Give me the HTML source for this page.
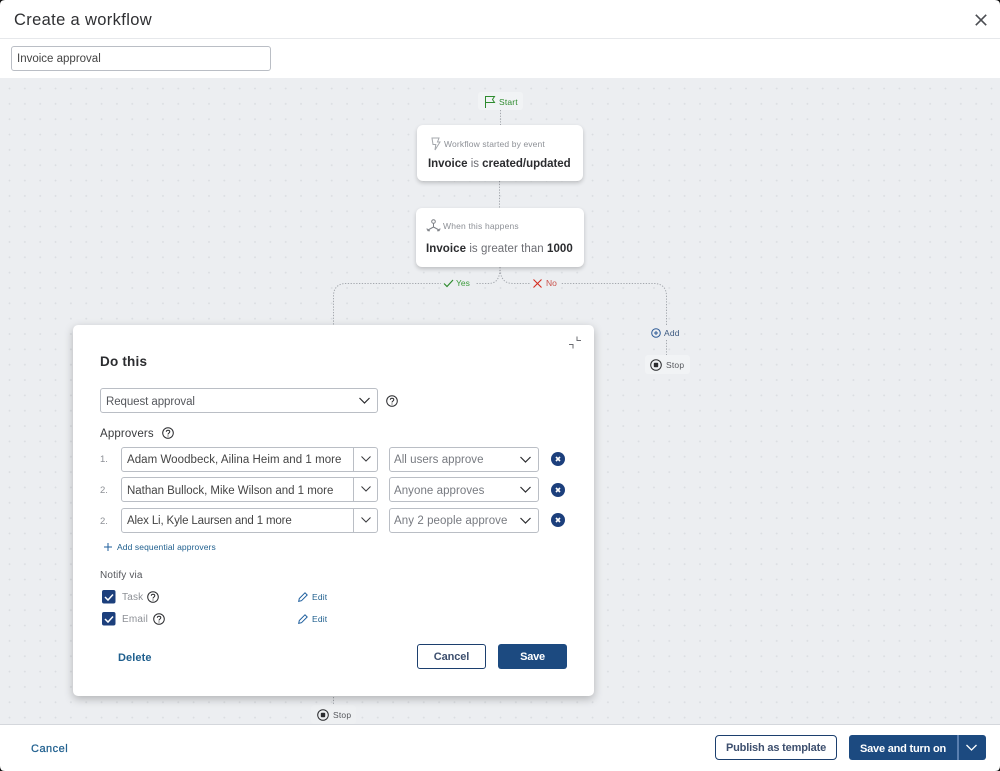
<!DOCTYPE html>
<html><head><meta charset="utf-8"><style>
*{box-sizing:border-box}
html,body{margin:0;padding:0;width:1000px;height:771px;overflow:hidden;background:#fff;font-family:"Liberation Sans",sans-serif;color:#393a3d}
.a{position:absolute;white-space:nowrap}
.card{position:absolute;background:#fff;border-radius:6px;box-shadow:0 2px 4px rgba(0,0,0,.2)}
.in{position:absolute;background:#fff;border:1px solid #babec5;border-radius:3px;height:25px}
.t{position:absolute;white-space:nowrap;font-size:11.5px;line-height:14px}
svg{position:absolute;overflow:visible}
.pill{position:absolute;background:#f1f3f5;border-radius:3px}
.x{font-size:8.5px;line-height:11px}
</style></head><body>
<div class="a" style="left:0;top:78px;width:1000px;height:646px;background-color:#eceef1;background-image:radial-gradient(circle at 1.5px 1.5px,#dadde1 0.7px,transparent 1.1px);background-size:15.35px 15.35px;background-position:8px 9px"></div>
<div class="a" style="left:0;top:38px;width:1000px;height:1px;background:#e6e8eb"></div>
<div class="a" style="left:0;top:724px;width:1000px;height:1px;background:#d4d7dc"></div>

<div class="t" style="left:14px;top:10px;font-size:16.5px;line-height:20px;color:#2f3033;letter-spacing:.35px">Create a workflow</div>
<svg style="left:975px;top:14px" width="12" height="12"><path d="M.8.8 11.2 11.2M11.2.8.8 11.2" stroke="#4b4d52" stroke-width="1.600" fill="none"/></svg>
<div class="in" style="left:11px;top:46px;width:260px"></div>
<div class="t" style="left:17px;top:52px;letter-spacing:0;color:#444">Invoice approval</div>

<svg style="left:0;top:0" width="1000" height="771" fill="none" stroke="#a4a8ae" stroke-width="1" stroke-dasharray="1.300 1.500">
<path d="M500.500 110V125M499.500 181V208M500 267C500 278 497 283.500 488 283.500H346C338 283.500 333.500 288 333.500 296V325M500 267C500 278 504 283.500 513 283.500H654C662 283.500 666.500 288 666.500 296V326M666.500 340V357M333.500 697V707"/>
</svg>

<div class="pill" style="left:478px;top:92px;width:45px;height:18px"></div>
<svg style="left:484px;top:95px" width="12" height="14" fill="none" stroke="#2e8b2e" stroke-width="1"><path d="M1.500 13V1.500H10.500L8.500 4.500 10.500 7.500H1.500"/></svg>
<div class="t x" style="left:499px;top:97px;color:#2e8b2e;letter-spacing:.15px">Start</div>

<div class="card" style="left:417px;top:125px;width:166px;height:56px"></div>
<svg style="left:430px;top:137px" width="12" height="14" fill="none" stroke="#a5a8ad" stroke-width="1"><path d="M2 1H9L7.500 5H10L5 13 5.800 7.500H3Z"/></svg>
<div class="t x" style="left:444px;top:139px;color:#8d9096;letter-spacing:.13px">Workflow started by event</div>
<div class="t" style="left:428px;top:157px;color:#2b2c2f;letter-spacing:-.02px"><b>Invoice</b> <span style="color:#6b6c72">is</span> <b>created/updated</b></div>

<div class="card" style="left:416px;top:208px;width:168px;height:59px"></div>
<svg style="left:426px;top:219px" width="15" height="14" fill="none" stroke="#7d8086" stroke-width="1"><circle cx="7.500" cy="2.500" r="1.800"/><path d="M7.500 4.500V8M7.500 8 2 11M7.500 8 13 11M.8 9.500 2 11.800 4 11.800M14.200 9.500 13 11.800 11 11.800"/></svg>
<div class="t x" style="left:443px;top:221px;color:#8d9096;letter-spacing:.18px">When this happens</div>
<div class="t" style="left:426px;top:242px;color:#2b2c2f;letter-spacing:.06px"><b>Invoice</b> <span style="color:#6b6c72">is greater than</span> <b>1000</b></div>

<div class="a" style="left:441px;top:277px;width:35px;height:13px;background:#eceef1"></div>
<svg style="left:443px;top:279px" width="11" height="9" fill="none" stroke="#2e8b2e" stroke-width="1.200"><path d="M1 4.500 4 7.500 10 1"/></svg>
<div class="t x" style="left:456px;top:278px;color:#3c9b3c">Yes</div>
<div class="a" style="left:531px;top:277px;width:30px;height:13px;background:#eceef1"></div>
<svg style="left:533px;top:279px" width="9" height="9" fill="none" stroke="#d52b1e" stroke-width="1.100"><path d="M.5.500 8.500 8.500M8.500.500.5 8.500"/></svg>
<div class="t x" style="left:546px;top:278px;color:#c9504a">No</div>

<div class="a" style="left:648px;top:326px;width:36px;height:14px;background:#eceef1"></div>
<svg style="left:651px;top:328px" width="10" height="10" fill="none" stroke="#2c5a96" stroke-width="1"><circle cx="5" cy="5" r="4.300"/><path d="M5 3V7M3 5H7"/></svg>
<div class="t x" style="left:664px;top:328px;color:#3d5a80;letter-spacing:.2px">Add</div>
<div class="pill" style="left:645px;top:355px;width:45px;height:19px"></div>
<svg style="left:650px;top:359px" width="12" height="12"><circle cx="6" cy="6" r="5.300" fill="none" stroke="#2b2c2f" stroke-width="1"/><rect x="3.800" y="3.800" width="4.400" height="4.400" rx=".8" fill="#2b2c2f"/></svg>
<div class="t x" style="left:666px;top:360px;color:#55575c;letter-spacing:.2px">Stop</div>

<div class="pill" style="left:311px;top:705px;width:45px;height:19px;background:#eef0f2"></div>
<svg style="left:317px;top:709px" width="12" height="12"><circle cx="6" cy="6" r="5.300" fill="none" stroke="#2b2c2f" stroke-width="1"/><rect x="3.800" y="3.800" width="4.400" height="4.400" rx=".8" fill="#2b2c2f"/></svg>
<div class="t x" style="left:333px;top:710px;color:#55575c;letter-spacing:.2px">Stop</div>

<!-- dialog -->
<div class="a" style="left:73px;top:325px;width:521px;height:371px;background:#fff;border-radius:5px;box-shadow:0 3px 9px rgba(0,0,0,.25)"></div>
<svg style="left:568px;top:336px" width="14" height="14" fill="none" stroke="#6b6c72" stroke-width="1"><path d="M9 0.500V4.500H13M1 8.500H5V12.500"/></svg>
<div class="t" style="left:100px;top:354px;font-size:13.500px;line-height:16px;font-weight:bold;color:#2b2c2f;letter-spacing:.2px">Do this</div>

<div class="in" style="left:100px;top:388px;width:278px"></div>
<div class="t" style="left:106px;top:395px;letter-spacing:-.08px;color:#55575c">Request approval</div>
<svg style="left:359px;top:397px" width="11" height="7" fill="none" stroke="#2b2c2f" stroke-width="1.200"><path d="M.5 1 5.500 6 10.500 1"/></svg>
<svg style="left:386px;top:395px" width="12" height="12" fill="none" stroke="#2b2c2f" stroke-width="1"><circle cx="6" cy="6" r="5.300"/><path d="M4.300 4.700C4.300 2.700 7.800 2.700 7.800 4.700 7.800 6 6 6 6 7.500M6 8.500V9.500"/></svg>

<div class="t" style="left:100px;top:427px;letter-spacing:.15px;color:#393a3d">Approvers</div>
<svg style="left:162px;top:427px" width="12" height="12" fill="none" stroke="#2b2c2f" stroke-width="1"><circle cx="6" cy="6" r="5.300"/><path d="M4.300 4.700C4.300 2.700 7.800 2.700 7.800 4.700 7.800 6 6 6 6 7.500M6 8.500V9.500"/></svg>

<div class="t" style="left:100px;top:453px;font-size:9.500px;color:#8d9096">1.</div>
<div class="in" style="left:121px;top:447px;width:257px"></div>
<div class="a" style="left:353px;top:447px;width:1px;height:25px;background:#babec5"></div>
<div class="t" style="left:127px;top:453px;letter-spacing:.05px;color:#444">Adam Woodbeck, Ailina Heim and 1 more</div>
<svg style="left:361px;top:456px" width="10" height="6" fill="none" stroke="#393a3d" stroke-width="1"><path d="M.5.500 5 5 9.500.500"/></svg>

<div class="t" style="left:100px;top:484px;font-size:9.500px;color:#8d9096">2.</div>
<div class="in" style="left:121px;top:477px;width:257px"></div>
<div class="a" style="left:353px;top:477px;width:1px;height:25px;background:#babec5"></div>
<div class="t" style="left:127px;top:484px;letter-spacing:-.02px;color:#444">Nathan Bullock, Mike Wilson and 1 more</div>
<svg style="left:361px;top:486px" width="10" height="6" fill="none" stroke="#393a3d" stroke-width="1"><path d="M.5.500 5 5 9.500.500"/></svg>

<div class="t" style="left:100px;top:515px;font-size:9.500px;color:#8d9096">2.</div>
<div class="in" style="left:121px;top:508px;width:257px"></div>
<div class="a" style="left:353px;top:508px;width:1px;height:25px;background:#babec5"></div>
<div class="t" style="left:127px;top:514px;letter-spacing:-.15px;color:#444">Alex Li, Kyle Laursen and 1 more</div>
<svg style="left:361px;top:517px" width="10" height="6" fill="none" stroke="#393a3d" stroke-width="1"><path d="M.5.500 5 5 9.500.500"/></svg>

<div class="in" style="left:389px;top:447px;width:150px"></div>
<div class="t" style="left:394px;top:453px;letter-spacing:.04px;color:#777a80">All users approve</div>
<svg style="left:520px;top:456px" width="11" height="7" fill="none" stroke="#2b2c2f" stroke-width="1.200"><path d="M.5 1 5.500 6 10.500 1"/></svg>
<div class="in" style="left:389px;top:477px;width:150px"></div>
<div class="t" style="left:394px;top:484px;letter-spacing:.06px;color:#777a80">Anyone approves</div>
<svg style="left:520px;top:486px" width="11" height="7" fill="none" stroke="#2b2c2f" stroke-width="1.200"><path d="M.5 1 5.500 6 10.500 1"/></svg>
<div class="in" style="left:389px;top:508px;width:150px"></div>
<div class="t" style="left:394px;top:514px;letter-spacing:.08px;color:#777a80">Any 2 people approve</div>
<svg style="left:520px;top:517px" width="11" height="7" fill="none" stroke="#2b2c2f" stroke-width="1.200"><path d="M.5 1 5.500 6 10.500 1"/></svg>

<svg style="left:551px;top:452px" width="15" height="15"><circle cx="7" cy="7" r="7" fill="#1c3f7c"/><path d="M5 5 9 9M9 5 5 9" stroke="#fff" stroke-width="1.600" fill="none"/></svg>
<svg style="left:551px;top:483px" width="15" height="15"><circle cx="7" cy="7" r="7" fill="#1c3f7c"/><path d="M5 5 9 9M9 5 5 9" stroke="#fff" stroke-width="1.600" fill="none"/></svg>
<svg style="left:551px;top:513px" width="15" height="15"><circle cx="7" cy="7" r="7" fill="#1c3f7c"/><path d="M5 5 9 9M9 5 5 9" stroke="#fff" stroke-width="1.600" fill="none"/></svg>

<svg style="left:104px;top:543px" width="8" height="8" fill="none" stroke="#1f5f9e" stroke-width="1"><path d="M4 0V8M0 4H8"/></svg>
<div class="t x" style="left:117px;top:542px;color:#1f5f8e;letter-spacing:.1px">Add sequential approvers</div>

<div class="t" style="left:100px;top:569px;font-size:10px;color:#55575c;letter-spacing:.15px">Notify via</div>

<svg style="left:102px;top:590px" width="14" height="14"><rect width="13.500" height="13.500" rx="2" fill="#1c3f7c"/><path d="M3 7 6 10 11 4.500" stroke="#fff" stroke-width="1.500" fill="none"/></svg>
<div class="t" style="left:122px;top:591px;font-size:10px;color:#8d9096;letter-spacing:.2px">Task</div>
<svg style="left:147px;top:591px" width="12" height="12" fill="none" stroke="#2b2c2f" stroke-width="1"><circle cx="6" cy="6" r="5.300"/><path d="M4.300 4.700C4.300 2.700 7.800 2.700 7.800 4.700 7.800 6 6 6 6 7.500M6 8.500V9.500"/></svg>
<svg style="left:298px;top:592px" width="10" height="10" fill="none" stroke="#1f5f9e" stroke-width="1"><path d="M.7 9.300 1.300 6.500 7 .8 9.200 3 3.500 8.700Z"/></svg>
<div class="t x" style="left:312px;top:592px;color:#1f5f8e;letter-spacing:.15px">Edit</div>

<svg style="left:102px;top:612px" width="14" height="14"><rect width="13.500" height="13.500" rx="2" fill="#1c3f7c"/><path d="M3 7 6 10 11 4.500" stroke="#fff" stroke-width="1.500" fill="none"/></svg>
<div class="t" style="left:122px;top:613px;font-size:10px;color:#8d9096;letter-spacing:.2px">Email</div>
<svg style="left:153px;top:613px" width="12" height="12" fill="none" stroke="#2b2c2f" stroke-width="1"><circle cx="6" cy="6" r="5.300"/><path d="M4.300 4.700C4.300 2.700 7.800 2.700 7.800 4.700 7.800 6 6 6 6 7.500M6 8.500V9.500"/></svg>
<svg style="left:298px;top:614px" width="10" height="10" fill="none" stroke="#1f5f9e" stroke-width="1"><path d="M.7 9.300 1.300 6.500 7 .8 9.200 3 3.500 8.700Z"/></svg>
<div class="t x" style="left:312px;top:614px;color:#1f5f8e;letter-spacing:.15px">Edit</div>

<div class="t" style="left:118px;top:651px;font-weight:bold;font-size:11px;color:#1f5f8e;letter-spacing:.1px">Delete</div>
<div class="a" style="left:417px;top:644px;width:69px;height:25px;border:1.200px solid #1c3f6e;border-radius:3px;background:#fff;text-align:center;font-size:11px;font-weight:bold;line-height:24px;color:#3d4f6e;letter-spacing:-.1px">Cancel</div>
<div class="a" style="left:498px;top:644px;width:69px;height:25px;border-radius:3px;background:#1c4a80;text-align:center;font-size:11px;font-weight:bold;line-height:26px;color:#fff;letter-spacing:-.25px">Save</div>

<div class="t" style="left:31px;top:742px;font-size:11px;font-weight:normal;color:#1f5f8e;letter-spacing:.5px;-webkit-text-stroke:.25px #1f5f8e">Cancel</div>
<div class="a" style="left:715px;top:735px;width:122px;height:25px;border:1.200px solid #1c3f6e;border-radius:4px;background:#fff;text-align:center;font-size:11px;font-weight:bold;line-height:24px;color:#3d4f6e;letter-spacing:-.17px">Publish as template</div>
<div class="a" style="left:849px;top:735px;width:137px;height:25px;border-radius:3px;background:#1c4a80"></div>
<div class="a" style="left:957px;top:735px;width:2px;height:25px;background:#5a7fb0"></div>
<div class="t" style="left:860px;top:742px;font-size:11px;font-weight:bold;color:#fff;letter-spacing:-.2px">Save and turn on</div>
<svg style="left:966px;top:744px" width="11" height="7" fill="none" stroke="#fff" stroke-width="1.300"><path d="M.5 1 5.500 6 10.500 1"/></svg>

<svg style="left:0;top:0" width="1000" height="771" fill="#111"><path d="M0 0H5Q0 0 0 5ZM1000 0H995Q1000 0 1000 5ZM0 771H5Q0 771 0 766ZM1000 771H995Q1000 771 1000 766Z"/></svg>
</body></html>
